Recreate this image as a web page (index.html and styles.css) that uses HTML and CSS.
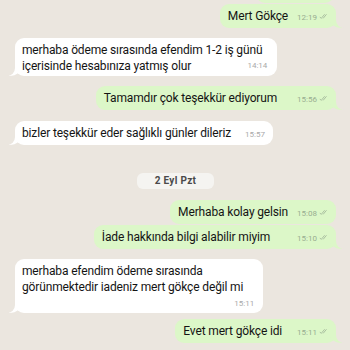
FILE: index.html
```html
<!DOCTYPE html>
<html>
<head>
    <title>Sohbet</title>
    <link rel="stylesheet" href="styles.css">
</head>
<body>
    <div class="chat">
        <div class="msg out first"></div>
        <div class="msg out tail close">
            <span class="text">Mert Gökçe</span>
            <span class="meta">12:19 <svg class="ticks" viewBox="0 0 12 8"><path d="M1 4.5l2 2 4.5-5.5M5.5 6.5l4.5-5.5"/></svg></span>
        </div>

        <div class="msg in tail wrap">
            <span class="text">merhaba ödeme sırasında efendim 1-2 iş günü<br>içerisinde hesabınıza yatmış olur</span>
            <span class="meta">14:14</span>
        </div>

        <div class="msg out tail spaced">
            <span class="text">Tamamdır çok teşekkür ediyorum</span>
            <span class="meta">15:56 <svg class="ticks" viewBox="0 0 12 8"><path d="M1 4.5l2 2 4.5-5.5M5.5 6.5l4.5-5.5"/></svg></span>
        </div>

        <div class="msg in tail next">
            <span class="text">bizler teşekkür eder sağlıklı günler dileriz</span>
            <span class="meta">15:57</span>
        </div>

        <div class="day">2 Eyl Pzt</div>

        <div class="msg out after-day">
            <span class="text">Merhaba kolay gelsin</span>
            <span class="meta">15:08 <svg class="ticks" viewBox="0 0 12 8"><path d="M1 4.5l2 2 4.5-5.5M5.5 6.5l4.5-5.5"/></svg></span>
        </div>
        <div class="msg out tail close spaced-lg">
            <span class="text">İade hakkında bilgi alabilir miyim</span>
            <span class="meta">15:10 <svg class="ticks" viewBox="0 0 12 8"><path d="M1 4.5l2 2 4.5-5.5M5.5 6.5l4.5-5.5"/></svg></span>
        </div>

        <div class="msg in tail stack">
            <span class="text">merhaba efendim ödeme sırasında<br>görünmektedir iadeniz mert gökçe değil mi</span>
            <span class="meta">15:11</span>
        </div>

        <div class="msg out tail last">
            <span class="text">Evet mert gökçe idi</span>
            <span class="meta">15:11 <svg class="ticks" viewBox="0 0 12 8"><path d="M1 4.5l2 2 4.5-5.5M5.5 6.5l4.5-5.5"/></svg></span>
        </div>
    </div>
</body>
</html>
```

FILE: styles.css
```css
body {
    margin: 0;
    background-color: #ebe6df;
    font-family: Roboto, 'Liberation Sans', Arial, sans-serif;
    color: #141414;
    height: 350px;
    overflow: hidden;
}
.chat {
    display: flex;
    flex-direction: column;
    padding: 0 14px 0 15px;
}
.msg {
    position: relative;
    display: flex;
    align-items: flex-end;
    gap: 9px;
    max-width: 280px;
    padding: 4px 8px 4px 7px;
    border-radius: 9px;
    font-size: 12px;
    letter-spacing: -0.15px;
    line-height: 16px;
    margin-top: 10px;
}
.msg.in {
    align-self: flex-start;
    background-color: #fff;
    gap: 14px;
}
.msg.out {
    align-self: flex-end;
    background-color: #dcf7c8;
    padding-left: 8px;
}
.msg.spaced {
    gap: 20px;
}
.msg.spaced-lg {
    gap: 27px;
}
/* previous message, scrolled almost out of view */
.msg.first {
    width: 78px;
    height: 24px;
    box-sizing: border-box;
    margin-top: -21px;
    margin-right: 2px;
}
.msg.close {
    margin-top: 1px;
}
.msg.next {
    margin-top: 11px;
}
.msg.after-day {
    margin-top: 11px;
}
.msg.last {
    margin-top: 6px;
    gap: 15px;
}
.msg.wrap {
    display: block;
    padding-right: 15px;
}
.msg.wrap .meta {
    display: block;
    text-align: right;
    margin-top: -14px;
    margin-right: -5px;
}
.msg.stack {
    display: block;
    padding-right: 20px;
}
.msg.stack .meta {
    display: block;
    text-align: right;
    margin-top: 4px;
    margin-right: -11px;
    line-height: 10px;
}
.meta {
    font-size: 8px;
    letter-spacing: 0;
    line-height: 12px;
    color: #a9a9a9;
    white-space: nowrap;
}
.out .meta {
    color: #98ad90;
}
.ticks {
    width: 9px;
    height: 7px;
    fill: none;
    stroke: #9aae93;
    stroke-width: 1;
}

/* bubble tails */
.tail::before,
.tail::after {
    content: "";
    position: absolute;
    bottom: 0;
    height: 14px;
}
.in.tail::before {
    left: -6px;
    width: 14px;
    background-color: #fff;
    border-bottom-right-radius: 14px 12px;
}
.in.tail::after {
    left: -10px;
    width: 10px;
    background-color: #ebe6df;
    border-bottom-right-radius: 8px;
}
.out.tail::before {
    right: -6px;
    width: 14px;
    background-color: #dcf7c8;
    border-bottom-left-radius: 14px 12px;
}
.out.tail::after {
    right: -10px;
    width: 10px;
    background-color: #ebe6df;
    border-bottom-left-radius: 8px;
}
.msg .text,
.msg .meta {
    position: relative;
    z-index: 1;
}

.day {
    align-self: center;
    margin-top: 28px;
    padding: 2px 18px;
    background-color: #f5f4f1;
    border-radius: 6px;
    font-size: 10px;
    font-weight: bold;
    line-height: 12px;
    color: #4a4a4a;
    letter-spacing: 0.3px;
}
```
